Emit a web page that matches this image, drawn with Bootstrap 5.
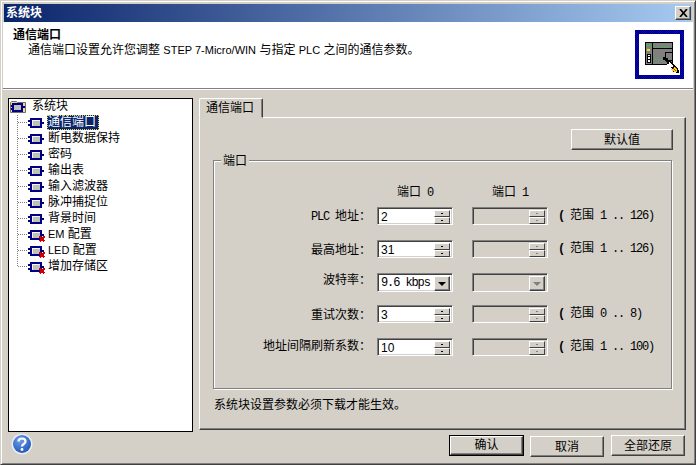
<!DOCTYPE html>
<html lang="zh">
<head>
<meta charset="utf-8">
<title>系统块</title>
<link href="https://cdn.jsdelivr.net/npm/bootstrap@5.3.0/dist/css/bootstrap.min.css" rel="stylesheet">
<style>
html,body{margin:0;height:465px;overflow:hidden;background:#d4d0c8}
body{font:12px/14px "Liberation Sans","Noto Sans CJK SC",sans-serif;color:#000}
.mono{font:12px/14px "Liberation Mono",monospace;letter-spacing:-1.2px;white-space:pre}
.tah{font-size:11px}
.colon{font-family:"Noto Sans CJK TC",sans-serif}
.paren{font-weight:700}
.xp-window{width:696px;height:465px;border:1px solid;border-color:#d4d0c8 #404040 #404040 #d4d0c8;box-shadow:inset 1px 1px 0 #fff,inset -1px -1px 0 #808080;padding:3px 3px 2px 3px}
.xp-title{height:18px;background:linear-gradient(90deg,#0a246a,#a6caf0);color:#fff;font-weight:700;padding:0 1px 0 2px;line-height:17px}
.xp-close{width:16px;height:14px;background:#d4d0c8;border:1px solid;border-color:#fff #404040 #404040 #fff;box-shadow:inset -1px -1px 0 #808080;padding:0}
.xp-head{height:67px;background:#fff;padding:6px 9px 0 10px;border-bottom:1px solid #808080;box-shadow:0 1px 0 #fff;margin-left:-1px;margin-right:-1px}
.xp-head b{display:block;line-height:14px}
.xp-head p{margin:1px 0 0 15px;line-height:14px}
.xp-logo{width:49px;height:49px;flex:none;margin-top:2px}
.xp-main{padding:9px 4px 0 4px;gap:6px;height:342px}
.xp-tree{width:185px;height:334px;background:#fff;border:1px solid #000;padding:0 0 0 1px;flex:none}
.xp-node{height:16px;white-space:nowrap}
.xp-node svg{display:block;flex:none}
.xp-node span.xp-txt{padding:0 3px 0 1px;height:15px;line-height:14px;display:block;margin-left:1px}
.xp-node .xp-root{margin-left:0;padding:0}
.xp-node .xp-sel{background:#0a246a;color:#fff;outline:1px dotted #e8d060;outline-offset:-1px}
.xp-right{width:487px}
.xp-tabhead{height:20px;width:64px;background:#d4d0c8;border:1px solid;border-color:#fff #404040 #d4d0c8 #fff;border-radius:2px 2px 0 0;padding:2px 0 0 6px;margin-bottom:-1px;position:relative;z-index:1;box-shadow:inset -1px 0 0 #808080}
.xp-panel{height:313px;border:1px solid;border-color:#fff #404040 #404040 #fff;box-shadow:inset -1px -1px 0 #808080;padding:11px 13px 0 13px}
.xp-btn{background:#d4d0c8;border:1px solid;border-color:#fff #404040 #404040 #fff;box-shadow:inset -1px -1px 0 #808080;border-radius:0;padding:0;color:#000;font-size:12px;line-height:16px;height:21px}
.xp-def{width:102px;margin-right:-1px}
.xp-group{margin-top:10px;height:229px;border:1px solid #808080;box-shadow:inset 1px 1px 0 #fff,1px 1px 0 #fff;position:relative;padding:24px 0 0 0}
.xp-legend{position:absolute;left:7px;top:-7px;background:#d4d0c8;padding:0 2px;line-height:14px}
.xp-cols{height:14px;margin-bottom:8px;padding-left:163px;gap:19px}
.xp-colh{width:76px;text-align:center;white-space:nowrap}
.xp-lab{width:157px;text-align:right;margin-right:6px;flex:none;white-space:nowrap}
.xp-row{height:18px;margin-bottom:15px;white-space:nowrap}
.xp-row.xp-tight{margin-bottom:14px}
.xp-lab.xp-high{margin-top:-5px}
.xp-lab.xp-mid{margin-top:-3px}
.xp-field{width:76px;height:18px;flex:none;background:#fff;border:1px solid;border-color:#808080 #fff #fff #808080;box-shadow:inset 1px 1px 0 #404040,inset -1px -1px 0 #d4d0c8;padding:2px;line-height:14px;margin-right:19px}
.xp-field.xp-combo{height:19px}
.xp-field.xp-off{background:#d4d0c8}
.xp-field>.xp-val{flex:1;padding-left:1px;font-family:"Liberation Sans",sans-serif;font-size:12px;line-height:15px}
.xp-field>.xp-val.xp-kbps{font:12px/15px "Liberation Mono",monospace;letter-spacing:-1.1px}
.xp-spin{width:16px;height:14px;flex:none}
.xp-spin i{display:block;height:7px;background:#d4d0c8;border:1px solid;border-color:#fff #404040 #404040 #fff;position:relative}
.xp-spin i::after{content:"";position:absolute;left:6px;top:2px;width:2px;height:1px;background:#000}
.xp-off .xp-spin i::after{background:#808080}
.xp-arrow{width:16px;height:15px;flex:none;background:#d4d0c8;border:1px solid;border-color:#fff #404040 #404040 #fff;box-shadow:inset -1px -1px 0 #808080;position:relative}
.xp-arrow::after{content:"";position:absolute;left:3px;top:5px;border:4px solid transparent;border-top-color:#000;border-bottom:0}
.xp-off .xp-arrow::after{border-top-color:#808080}
.xp-note{margin-left:-9px;margin-top:-1px}
.xp-hint{margin-top:9px;margin-left:1px}
.xp-foot{height:31px;padding:4px 7px 0 7px}
.xp-help{width:22px;height:22px;flex:none;margin-top:-2px}
.xp-foot .xp-btn{width:74px;margin-left:7px;margin-top:1px}
.xp-foot .xp-ok{outline:1px solid #000;width:73px;height:19px;margin-top:1px;line-height:15px}
.xp-foot .xp-up{margin-top:0}
</style>
</head>
<body>
<svg width="0" height="0" class="d-block" style="position:absolute">
<defs>
<symbol id="mod" viewBox="0 0 16 11">
<path d="M3 2h10v8H3z" fill="#c0c0c0" stroke="#000080" stroke-width="2"/>
<path d="M4 3h8v1H5v5H4z" fill="#f4f4f4"/>
<path d="M0 3h3v2H0zM0 7h3v2H0zM13 5h3v2h-3z" fill="#000080"/>
</symbol>
<symbol id="cross" viewBox="0 0 6 6">
<path d="M.5.5l5 5M5.500.5l-5 5" stroke="#d00000" stroke-width="1.800" fill="none"/>
</symbol>
</defs>
</svg>
<div class="xp-window d-flex flex-column">
  <div class="xp-title d-flex justify-content-between align-items-center">
    <span>系统块</span>
    <button class="xp-close d-flex align-items-center justify-content-center" aria-label="关闭"><svg width="9" height="8" viewBox="0 0 9 8"><path d="M1 0l7 8M8 0L1 8" stroke="#000" stroke-width="1.700" fill="none"/></svg></button>
  </div>
  <div class="xp-head d-flex justify-content-between">
    <div>
      <b>通信端口</b>
      <p>通信端口设置允许您调整 <span class="tah">STEP 7-Micro/WIN</span> 与指定 <span class="tah">PLC</span> 之间的通信参数。</p>
    </div>
    <svg class="xp-logo" viewBox="0 0 49 49" shape-rendering="crispEdges">
      <defs><pattern id="dith" width="2" height="2" patternUnits="userSpaceOnUse"><rect width="2" height="2" fill="#000050"/><rect width="1" height="1" fill="#0000e0"/><rect x="1" y="1" width="1" height="1" fill="#0000e0"/></pattern></defs>
      <rect width="49" height="49" fill="url(#dith)"/>
      <rect x="4" y="4" width="41" height="41" fill="#fff"/>
      <path d="M10.500 12.500h27v22h-27z" fill="#808080" stroke="#000"/>
      <path d="M17.500 12.500v22M17.500 18.500h20" stroke="#000" fill="none"/>
      <path d="M30.500 22.500h7v8h-7z" fill="#808080" stroke="#000"/>
      <path d="M12 15h3v1h-3zM20 17h1v1h-1zM23 17h1v1h-1zM26 17h1v1h-1zM29 17h1v1h-1zM32 17h1v1h-1zM20 29h1v1h-1zM23 29h1v1h-1zM26 29h1v1h-1z" fill="#00f000"/>
      <path d="M12 19h3v2h-3z" fill="#f0e020"/>
      <path d="M12.500 24.500h3v8h-3z" fill="#fff" stroke="#000"/>
      <path d="M13 26h2v1h-2zM13 29h2v1h-2z" fill="#000"/>
      <path d="M28 27h3v1h2v2h1v2h-3v-1h-1v-1h-2z" fill="#000"/>
      <path d="M33 30h2v1h1v1h1v1h1v1h1v1h1v1h1v1h1v1h1v2h1v3h-3v-1h-3v-2h-1v-2h-1v-1h-1v-1h-1v-1h-1v-1h-1v-2h2z" fill="#000"/>
      <path d="M34 32h1v1h1v1h1v1h1v1h1l-5 3v-1h-1v-1h-1v-1h-1v-1h1v-1h2z" fill="#fff"/>
      <path d="M39 37h1v1h1v1h1v3h-3v-1h-2v-1h-1v-1h2v-1h1z" fill="#f0d820"/>
      <path d="M38 38h1v1h1v1h1v1h-1v-1h-1v-1h-1zM40 37h1v1h1v1h-1v-1h-1z" fill="#d02000"/>
    </svg>
  </div>
  <div class="xp-main d-flex">
    <div class="xp-tree">
      <div class="xp-node d-flex"><svg width="20" height="16" viewBox="0 0 20 16"><path d="M.5 3.500l1-1h5l1 1h8v10H.5z" fill="#f0dc90" stroke="#707070"/><path d="M3 5h9v7H3z" fill="#c0c0c0" stroke="#000080" stroke-width="2"/><path d="M1 6h2v2H1zM1 9h2v2H1zM12 7h3v2h-3z" fill="#000080"/></svg><span class="xp-txt xp-root">系统块</span></div>
      <div class="xp-node d-flex"><svg width="36" height="16" viewBox="0 0 36 16" shape-rendering="crispEdges"><path d="M7.500 0v16M8 7.500h10" stroke="#808080" stroke-dasharray="1 1" fill="none"/><use href="#mod" x="18" y="2" width="16" height="11"/></svg><span class="xp-txt xp-sel">通信端口</span></div>
      <div class="xp-node d-flex"><svg width="36" height="16" viewBox="0 0 36 16" shape-rendering="crispEdges"><path d="M7.500 0v16M8 7.500h10" stroke="#808080" stroke-dasharray="1 1" fill="none"/><use href="#mod" x="18" y="2" width="16" height="11"/></svg><span class="xp-txt">断电数据保持</span></div>
      <div class="xp-node d-flex"><svg width="36" height="16" viewBox="0 0 36 16" shape-rendering="crispEdges"><path d="M7.500 0v16M8 7.500h10" stroke="#808080" stroke-dasharray="1 1" fill="none"/><use href="#mod" x="18" y="2" width="16" height="11"/></svg><span class="xp-txt">密码</span></div>
      <div class="xp-node d-flex"><svg width="36" height="16" viewBox="0 0 36 16" shape-rendering="crispEdges"><path d="M7.500 0v16M8 7.500h10" stroke="#808080" stroke-dasharray="1 1" fill="none"/><use href="#mod" x="18" y="2" width="16" height="11"/></svg><span class="xp-txt">输出表</span></div>
      <div class="xp-node d-flex"><svg width="36" height="16" viewBox="0 0 36 16" shape-rendering="crispEdges"><path d="M7.500 0v16M8 7.500h10" stroke="#808080" stroke-dasharray="1 1" fill="none"/><use href="#mod" x="18" y="2" width="16" height="11"/></svg><span class="xp-txt">输入滤波器</span></div>
      <div class="xp-node d-flex"><svg width="36" height="16" viewBox="0 0 36 16" shape-rendering="crispEdges"><path d="M7.500 0v16M8 7.500h10" stroke="#808080" stroke-dasharray="1 1" fill="none"/><use href="#mod" x="18" y="2" width="16" height="11"/></svg><span class="xp-txt">脉冲捕捉位</span></div>
      <div class="xp-node d-flex"><svg width="36" height="16" viewBox="0 0 36 16" shape-rendering="crispEdges"><path d="M7.500 0v16M8 7.500h10" stroke="#808080" stroke-dasharray="1 1" fill="none"/><use href="#mod" x="18" y="2" width="16" height="11"/></svg><span class="xp-txt">背景时间</span></div>
      <div class="xp-node d-flex"><svg width="36" height="16" viewBox="0 0 36 16" shape-rendering="crispEdges"><path d="M7.500 0v16M8 7.500h10" stroke="#808080" stroke-dasharray="1 1" fill="none"/><use href="#mod" x="18" y="2" width="16" height="11"/><use href="#cross" x="29" y="9" width="6" height="6"/></svg><span class="xp-txt"><span class="tah">EM</span> 配置</span></div>
      <div class="xp-node d-flex"><svg width="36" height="16" viewBox="0 0 36 16" shape-rendering="crispEdges"><path d="M7.500 0v16M8 7.500h10" stroke="#808080" stroke-dasharray="1 1" fill="none"/><use href="#mod" x="18" y="2" width="16" height="11"/><use href="#cross" x="29" y="9" width="6" height="6"/></svg><span class="xp-txt"><span class="tah">LED</span> 配置</span></div>
      <div class="xp-node d-flex"><svg width="36" height="16" viewBox="0 0 36 16" shape-rendering="crispEdges"><path d="M7.500 0v8M8 7.500h10" stroke="#808080" stroke-dasharray="1 1" fill="none"/><use href="#mod" x="18" y="2" width="16" height="11"/><use href="#cross" x="29" y="9" width="6" height="6"/></svg><span class="xp-txt">增加存储区</span></div>
    </div>
    <div class="xp-right">
      <div class="xp-tabhead">通信端口</div>
      <div class="xp-panel">
        <div class="d-flex justify-content-end"><button class="xp-btn xp-def">默认值</button></div>
        <div class="xp-group">
          <div class="xp-legend">端口</div>
          <div class="xp-cols d-flex">
            <div class="xp-colh">端口<span class="mono"> 0</span></div>
            <div class="xp-colh">端口<span class="mono"> 1</span></div>
          </div>
          <div class="xp-row d-flex align-items-center"><div class="xp-lab"><span class="mono">PLC </span>地址<span class="colon">：</span></div>
            <div class="xp-field d-flex"><span class="xp-val">2</span><div class="xp-spin d-flex flex-column"><i></i><i></i></div></div>
            <div class="xp-field xp-off d-flex"><span class="xp-val"></span><div class="xp-spin d-flex flex-column"><i></i><i></i></div></div>
            <div class="xp-note"><span class="mono"><span class="paren">(</span> </span>范围<span class="mono"> 1 .. 126)</span></div></div>
          <div class="xp-row d-flex align-items-center"><div class="xp-lab">最高地址<span class="colon">：</span></div>
            <div class="xp-field d-flex"><span class="xp-val">31</span><div class="xp-spin d-flex flex-column"><i></i><i></i></div></div>
            <div class="xp-field xp-off d-flex"><span class="xp-val"></span><div class="xp-spin d-flex flex-column"><i></i><i></i></div></div>
            <div class="xp-note"><span class="mono"><span class="paren">(</span> </span>范围<span class="mono"> 1 .. 126)</span></div></div>
          <div class="xp-row xp-tight d-flex align-items-center"><div class="xp-lab xp-high">波特率<span class="colon">：</span></div>
            <div class="xp-field xp-combo d-flex"><span class="xp-val xp-kbps">9.6 kbps</span><div class="xp-arrow"></div></div>
            <div class="xp-field xp-combo xp-off d-flex"><span class="xp-val"></span><div class="xp-arrow"></div></div></div>
          <div class="xp-row d-flex align-items-center"><div class="xp-lab">重试次数<span class="colon">：</span></div>
            <div class="xp-field d-flex"><span class="xp-val">3</span><div class="xp-spin d-flex flex-column"><i></i><i></i></div></div>
            <div class="xp-field xp-off d-flex"><span class="xp-val"></span><div class="xp-spin d-flex flex-column"><i></i><i></i></div></div>
            <div class="xp-note"><span class="mono"><span class="paren">(</span> </span>范围<span class="mono"> 0 .. 8)</span></div></div>
          <div class="xp-row d-flex align-items-center"><div class="xp-lab xp-mid">地址间隔刷新系数<span class="colon">：</span></div>
            <div class="xp-field d-flex"><span class="xp-val">10</span><div class="xp-spin d-flex flex-column"><i></i><i></i></div></div>
            <div class="xp-field xp-off d-flex"><span class="xp-val"></span><div class="xp-spin d-flex flex-column"><i></i><i></i></div></div>
            <div class="xp-note"><span class="mono"><span class="paren">(</span> </span>范围<span class="mono"> 1 .. 100)</span></div></div>
        </div>
        <div class="xp-hint">系统块设置参数必须下载才能生效。</div>
      </div>
    </div>
  </div>
  <div class="xp-foot d-flex justify-content-between">
    <svg class="xp-help" viewBox="0 0 22 22"><defs><radialGradient id="hg" cx=".4" cy=".3" r=".8"><stop offset="0" stop-color="#6f9fe8"/><stop offset="1" stop-color="#1a4fb0"/></radialGradient></defs><circle cx="11" cy="11" r="10.500" fill="#e8eef8"/><circle cx="11" cy="11" r="9" fill="url(#hg)"/><path d="M7.500 8.500c0-4 7-4 7 0 0 2.500-3.500 2.500-3.500 5" fill="none" stroke="#fff" stroke-width="2.200"/><circle cx="11" cy="16.500" r="1.400" fill="#fff"/></svg>
    <div class="d-flex align-items-start">
      <button class="xp-btn xp-ok">确认</button>
      <button class="xp-btn">取消</button>
      <button class="xp-btn xp-up">全部还原</button>
    </div>
  </div>
</div>
<script src="https://cdn.jsdelivr.net/npm/bootstrap@5.3.0/dist/js/bootstrap.bundle.min.js"></script>
</body>
</html>
